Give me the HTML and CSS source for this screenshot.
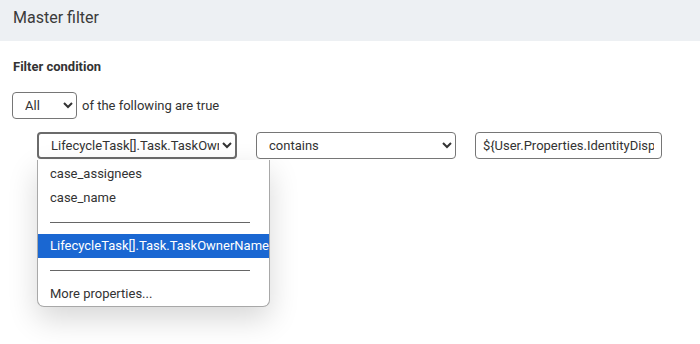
FILE: index.html
```html
<!DOCTYPE html>
<html lang="en">
<head>
    <meta charset="UTF-8">
    <title>Master filter</title>
    <link rel="stylesheet" href="styles.css">
</head>
<body>
    <div class="panel-header">Master filter</div>
    <div class="panel-body">
        <div class="section-title">Filter condition</div>
        <div class="match-row">
            <select class="match-select">
                <option>All</option>
                <option>Any</option>
            </select>
            <span>of the following are true</span>
        </div>
        <div class="condition-row">
            <div class="field-wrap">
                <select class="field-select">
                    <option>LifecycleTask[].Task.TaskOwnerName</option>
                </select>
                <div class="dropdown">
                    <div class="dropdown-item">case_assignees</div>
                    <div class="dropdown-item">case_name</div>
                    <div class="dropdown-sep"><span></span></div>
                    <div class="dropdown-item selected">LifecycleTask[].Task.TaskOwnerName</div>
                    <div class="dropdown-sep"><span></span></div>
                    <div class="dropdown-item">More properties...</div>
                </div>
            </div>
            <select class="op-select">
                <option>contains</option>
            </select>
            <input class="value-input" type="text" value="${User.Properties.IdentityDisplayName}">
        </div>
    </div>
</body>
</html>
```

FILE: styles.css
```css
body {
    margin: 0;
    min-height: 344px;
    font-family: Roboto, "Noto Sans", sans-serif;
    font-size: 13px;
    color: #333;
    background-color: white;
}
.panel-header {
    height: 41px;
    background-color: #edf0f3;
    padding-left: 13px;
    font-size: 16px;
    line-height: 35px;
    color: #3a3a3a;
}
.panel-body {
    padding: 18px 12px 0 13px;
}
.section-title {
    font-weight: bold;
    font-size: 13px;
    line-height: 16px;
}
.match-row {
    display: flex;
    align-items: center;
    gap: 5px;
    margin-top: 17px;
}
.match-row select {
    margin-left: -1px;
}
select, input {
    font-family: Roboto, "Noto Sans", sans-serif;
    font-size: 13px;
    color: #333;
    height: 27px;
    box-sizing: border-box;
    border: 1px solid #767676;
    border-radius: 4px;
    background-color: white;
}
.match-select {
    width: 65px;
    padding-left: 8px;
}
.condition-row {
    display: flex;
    align-items: flex-start;
    margin-top: 13px;
    margin-left: 24px;
    gap: 19px;
}
.field-wrap {
    display: flex;
    flex-direction: column;
    width: 200px;
}
.field-select {
    width: 200px;
    border: 2px solid #6b6b6b;
    padding-left: 8px;
}
.op-select {
    width: 200px;
    padding-left: 8px;
}
.value-input {
    width: 187px;
    padding: 0 7px;
}
.dropdown {
    width: 233px;
    box-sizing: border-box;
    margin-top: 1px;
    background-color: white;
    border: 1px solid #a8a8a8;
    border-top: none;
    border-radius: 0 0 7px 7px;
    box-shadow: 0 12px 30px rgba(0, 0, 0, 0.16);
    padding-top: 2px;
    overflow: hidden;
}
.dropdown-item {
    height: 24px;
    line-height: 24px;
    padding-left: 12px;
    white-space: nowrap;
}
.dropdown-item.selected {
    background-color: #1a67d2;
    color: white;
}
.dropdown-sep {
    height: 24px;
    display: flex;
    align-items: center;
    padding-left: 12px;
}
.dropdown-sep span {
    display: block;
    width: 200px;
    border-top: 1px solid #666;
    margin-top: 1px;
}
```
